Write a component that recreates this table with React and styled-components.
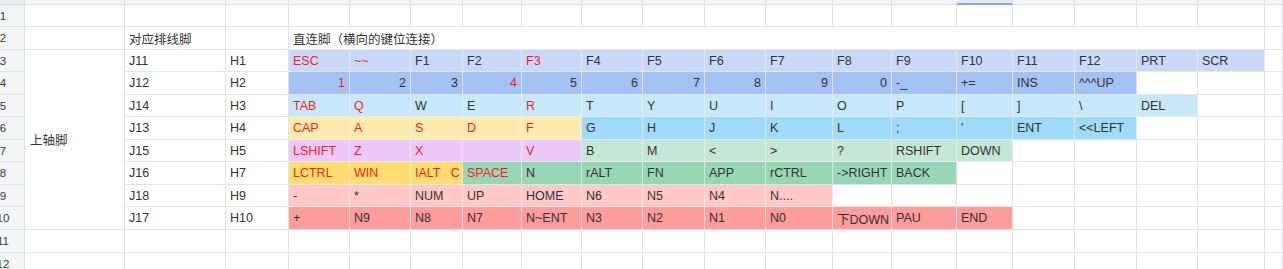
import React from "react";
import styled, { createGlobalStyle } from "styled-components";

const GlobalStyle = createGlobalStyle`
  html, body {
    margin: 0;
    padding: 0;
    background: #ffffff;
    overflow: hidden;
  }
  body {
    font-family: "Liberation Sans", Arial, "Noto Sans CJK SC", sans-serif;
  }
`;

// column widths measured from the sheet: row header, A, B, C, D..S, rest
const COLS = [25, 100, 101, 63, 61, 61, 52, 59, 60, 61, 62, 61, 67, 59, 65, 56, 62, 62, 61, 67];
const ROWS = [5, 22, 23, 22, 23, 22, 23, 22, 23, 22, 23, 23, 22];
const KEY_COLS = 16;
const SELECTED_COL = 15; // column O header is highlighted

const C = {
  fn: "#c9daf8",
  num: "#a4c2f4",
  alpha: "#c7e8fb",
  home: "#ffeaae",
  cyan: "#9fdcfa",
  purple: "#ecc9f8",
  mint: "#c5e8d5",
  gold: "#ffde71",
  green: "#98d7b6",
  pink: "#ffc9c9",
  rose: "#ff9c9c",
};

// "*" in front of a key means the label is written in red
const keyRows = [
  {
    pin: "J11",
    h: "H1",
    groups: [
      { bg: C.fn, keys: ["*ESC", "*~~", "F1", "F2", "*F3", "F4", "F5", "F6", "F7", "F8", "F9", "F10", "F11", "F12", "PRT", "SCR"] },
    ],
  },
  {
    pin: "J12",
    h: "H2",
    groups: [
      { bg: C.num, keys: ["*1", "2", "3", "*4", "5", "6", "7", "8", "9", "0", "-_", "+=", "INS", "^^^UP"] },
    ],
  },
  {
    pin: "J14",
    h: "H3",
    groups: [
      { bg: C.alpha, keys: ["*TAB", "*Q", "W", "E", "*R", "T", "Y", "U", "I", "O", "P", "[", "]", "\\", "DEL"] },
    ],
  },
  {
    pin: "J13",
    h: "H4",
    groups: [
      { bg: C.home, keys: ["*CAP", "*A", "*S", "*D", "*F"] },
      { bg: C.cyan, keys: ["G", "H", "J", "K", "L", ";", "'", "ENT", "<<LEFT"] },
    ],
  },
  {
    pin: "J15",
    h: "H5",
    groups: [
      { bg: C.purple, keys: ["*LSHIFT", "*Z", "*X", "", "*V"] },
      { bg: C.mint, keys: ["B", "M", "<", ">", "?", "RSHIFT", "DOWN"] },
    ],
  },
  {
    pin: "J16",
    h: "H7",
    groups: [
      { bg: C.gold, keys: ["*LCTRL", "*WIN", "*IALT   C"] },
      { bg: C.green, keys: ["*SPACE", "N", "rALT", "FN", "APP", "rCTRL", "->RIGHT", "BACK"] },
    ],
  },
  {
    pin: "J18",
    h: "H9",
    groups: [
      { bg: C.pink, keys: ["-", "*", "NUM", "UP", "HOME", "N6", "N5", "N4", "N...."] },
    ],
  },
  {
    pin: "J17",
    h: "H10",
    groups: [
      { bg: C.rose, keys: ["+", "N9", "N8", "N7", "N~ENT", "N3", "N2", "N1", "N0", "下DOWN", "PAU", "END"] },
    ],
  },
];

function App() {
  const cells = [];

  // clipped column header strip
  cells.push(<HeadCorner key="hc" />);
  for (let i = 1; i < COLS.length + 1; i++) {
    cells.push(<ColHead key={"ch" + i} $active={i === SELECTED_COL} />);
  }

  // row 1
  cells.push(<RowNum key="r1"><span>1</span></RowNum>);
  for (let i = 0; i < COLS.length; i++) cells.push(<Cell key={"a" + i} />);

  // row 2
  cells.push(<RowNum key="r2"><span>2</span></RowNum>);
  cells.push(<Cell key="b0" />);
  cells.push(<Cell key="b1">对应排线脚</Cell>);
  cells.push(<Cell key="b2" />);
  cells.push(<Cell key="b3" style={{ gridColumn: `span ${KEY_COLS}` }}>直连脚（横向的键位连接）</Cell>);
  cells.push(<Cell key="b4" />);

  // rows 3..10
  keyRows.forEach((row, r) => {
    const n = r + 3;
    cells.push(<RowNum key={"rn" + n}><span>{n}</span></RowNum>);
    if (r === 0) {
      cells.push(<SideLabel key="side" $rows={keyRows.length}>上轴脚</SideLabel>);
    }
    cells.push(<Cell key={"p" + n}>{row.pin}</Cell>);
    cells.push(<Cell key={"h" + n}>{row.h}</Cell>);
    let count = 0;
    row.groups.forEach((g) => {
      g.keys.forEach((k) => {
        const red = k.startsWith("*") && k.length > 1;
        const label = red ? k.slice(1) : k;
        cells.push(
          <Cell
            key={`k${n}-${count}`}
            $bg={g.bg}
            $red={red}
            $right={/^\d$/.test(label)}
          >
            {label}
          </Cell>
        );
        count++;
      });
    });
    for (; count < KEY_COLS; count++) cells.push(<Cell key={`k${n}-${count}`} />);
    cells.push(<Cell key={"e" + n} />);
  });

  // rows 11, 12
  [11, 12].forEach((n) => {
    cells.push(<RowNum key={"rn" + n}><span>{n}</span></RowNum>);
    for (let i = 0; i < COLS.length; i++) cells.push(<Cell key={`z${n}-${i}`} />);
  });

  return (
    <>
      <GlobalStyle />
      <Sheet>{cells}</Sheet>
    </>
  );
}

export default App;

const Sheet = styled.div`
  display: grid;
  grid-template-columns: ${COLS.map((w) => w + "px").join(" ")} 1fr;
  grid-template-rows: ${ROWS.map((h) => h + "px").join(" ")};
  width: 1283px;
  height: 269px;
  overflow: hidden;
  font-size: 12.5px;
  color: #333333;
`;

const HeadCorner = styled.div`
  background: #eceef1;
  border-right: 1px solid #dcdde0;
  border-bottom: 1px solid #d6d7da;
  box-sizing: border-box;
`;

const ColHead = styled.div`
  box-sizing: border-box;
  background: ${(p) => (p.$active ? "#e8eaee" : "#f4f5f7")};
  border-right: 1px solid #e1e2e5;
  border-bottom: ${(p) => (p.$active ? "2px solid #7ea8f0" : "1px solid #dcdde0")};
`;

const RowNum = styled.div`
  box-sizing: border-box;
  position: relative;
  overflow: hidden;
  background: #f4f5f7;
  border-right: 1px solid #dfe0e3;
  border-bottom: 1px solid #e4e5e8;
  display: flex;
  align-items: center;
  font-size: 11.5px;
  color: #3a3a3a;

  span {
    flex: none;
    width: 40px;
    margin-left: -17px;
    text-align: center;
  }
`;

const Cell = styled.div`
  box-sizing: border-box;
  min-width: 0;
  display: flex;
  align-items: center;
  justify-content: ${(p) => (p.$right ? "flex-end" : "flex-start")};
  padding: 0 4px;
  white-space: pre;
  overflow: hidden;
  background: ${(p) => p.$bg || "#ffffff"};
  color: ${(p) => (p.$red ? "#f41c1c" : "#333333")};
  border-right: 1px solid ${(p) => (p.$bg ? "rgba(235, 238, 242, 0.75)" : "#e3e4e7")};
  border-bottom: 1px solid ${(p) => (p.$bg ? "rgba(235, 238, 242, 0.75)" : "#e3e4e7")};
`;

const SideLabel = styled(Cell)`
  grid-row: span ${(p) => p.$rows};
  padding-left: 5px;
`;
